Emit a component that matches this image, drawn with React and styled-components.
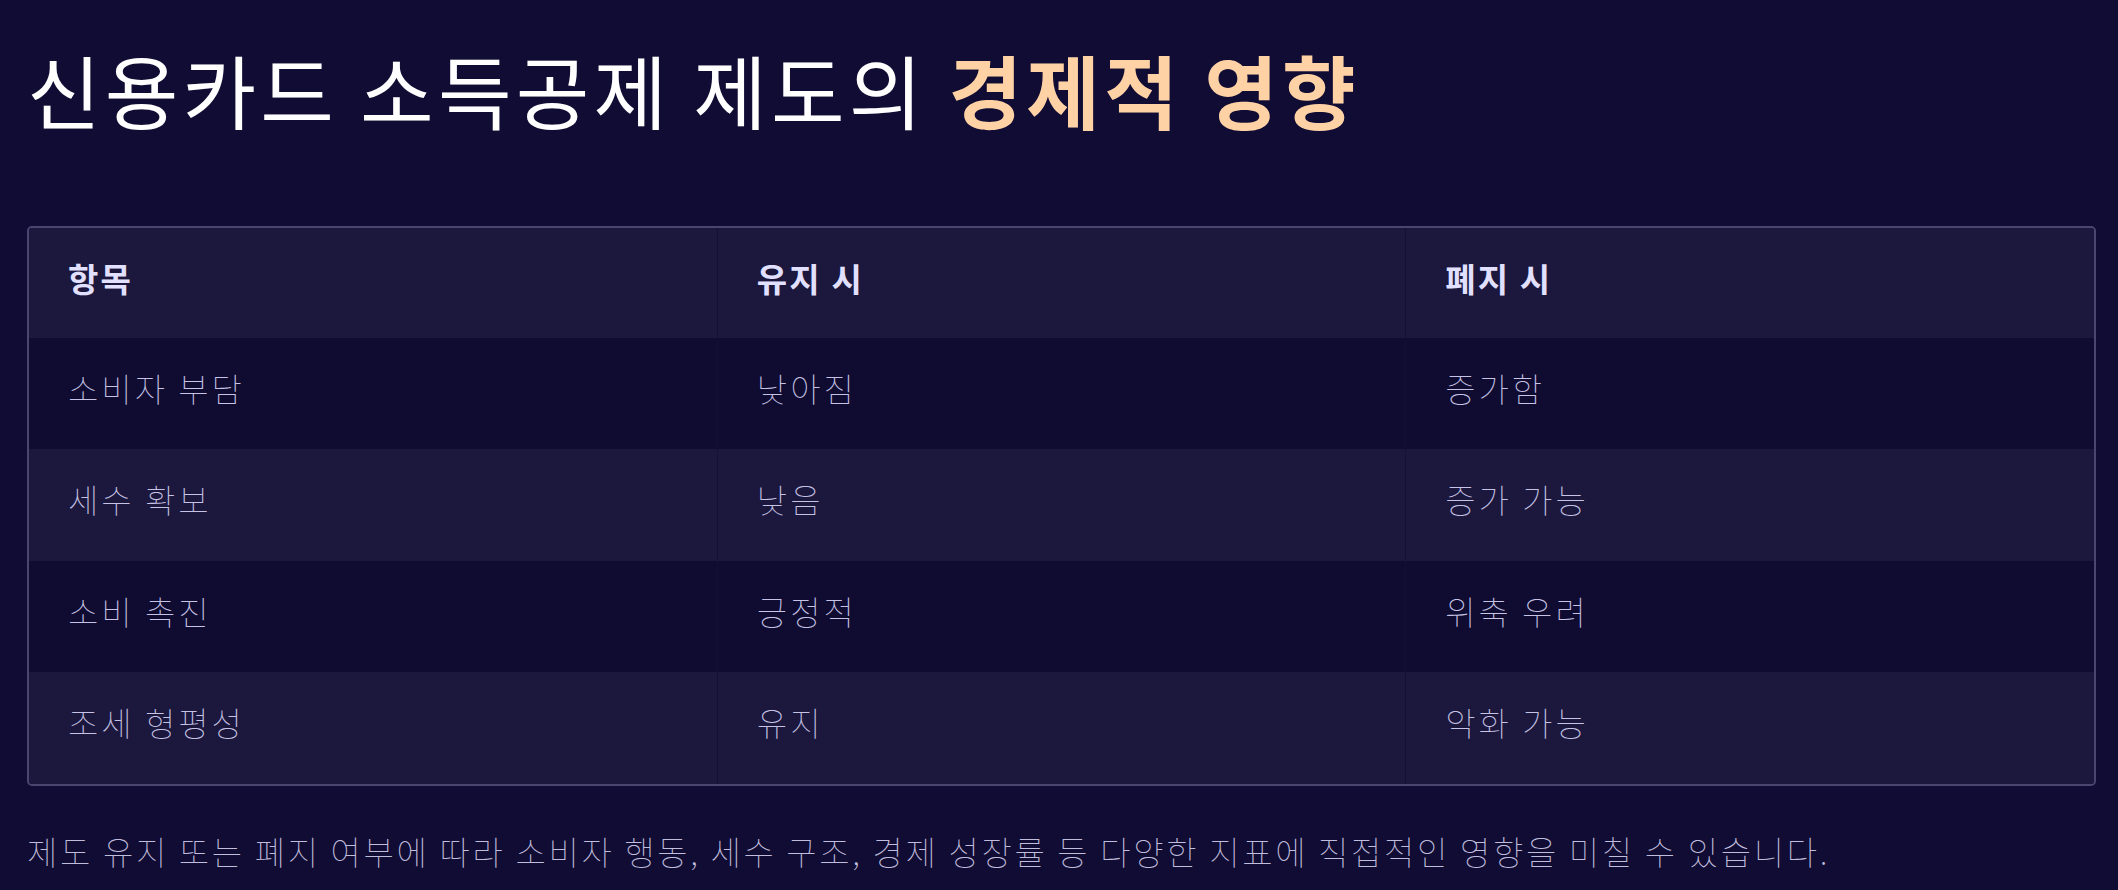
import React from "react";
import styled, { createGlobalStyle } from "styled-components";

const GlobalStyle = createGlobalStyle`
  html, body {
    margin: 0;
    padding: 0;
    background: #100c33;
  }
  body {
    font-family: "Noto Sans CJK KR", "Noto Sans", sans-serif;
    color: #ffffff;
  }
`;

const thin = `"Noto Sans CJK KR Thin", "Noto Sans CJK KR Light", "Noto Sans CJK KR", "Noto Sans", sans-serif`;

const Page = styled.main`
  min-height: 890px;
  box-sizing: border-box;
  padding: 40px 22px 0 27px;
  background: #100c33;
`;

const Title = styled.h1`
  margin: 0;
  font-size: 80px;
  font-weight: 400;
  line-height: 1.2;
  color: #ffffff;
  letter-spacing: 0.052em;
`;

const Accent = styled.span`
  color: #ffd2a6;
  font-weight: 700;
`;

const TableFrame = styled.div`
  margin-top: 90px;
  border: 2px solid #4a4670;
  border-radius: 5px;
  overflow: hidden;
`;

const Table = styled.table`
  width: 100%;
  border-collapse: collapse;
  table-layout: fixed;
`;

const Row = styled.tr`
  background: ${(p) => (p.$shaded ? "#1b173d" : "#0f0b31")};
`;

const HeadCell = styled.th`
  text-align: left;
  padding: 31px 39px 39px;
  font-size: 33px;
  line-height: 1.2;
  font-weight: 700;
  letter-spacing: 0.065em;
  color: #e2e0ff;
  border-right: 1px solid #141034;
  &:last-child {
    border-right: none;
  }
`;

const Cell = styled.td`
  padding: 31px 39px 41px;
  font-family: ${thin};
  font-size: 33px;
  line-height: 1.2;
  font-weight: 100;
  letter-spacing: 0.09em;
  color: #c6c3e4;
  border-right: 1px solid #141034;
  &:last-child {
    border-right: none;
  }
`;

const Note = styled.p`
  margin: 41px 0 0 0;
  font-family: ${thin};
  font-size: 33px;
  line-height: 1.5;
  font-weight: 100;
  letter-spacing: 0.08em;
  color: #c0bddd;
`;

const rows = [
  ["소비자 부담", "낮아짐", "증가함"],
  ["세수 확보", "낮음", "증가 가능"],
  ["소비 촉진", "긍정적", "위축 우려"],
  ["조세 형평성", "유지", "악화 가능"],
];

export default function App() {
  return (
    <>
      <GlobalStyle />
      <Page>
        <Title>
          신용카드 소득공제 제도의 <Accent>경제적 영향</Accent>
        </Title>
        <TableFrame>
          <Table>
            <thead>
              <Row $shaded>
                <HeadCell>항목</HeadCell>
                <HeadCell>유지 시</HeadCell>
                <HeadCell>폐지 시</HeadCell>
              </Row>
            </thead>
            <tbody>
              {rows.map((r, i) => (
                <Row key={r[0]} $shaded={i % 2 === 1}>
                  {r.map((c) => (
                    <Cell key={c}>{c}</Cell>
                  ))}
                </Row>
              ))}
            </tbody>
          </Table>
        </TableFrame>
        <Note>
          제도 유지 또는 폐지 여부에 따라 소비자 행동, 세수 구조, 경제 성장률 등 다양한 지표에 직접적인 영향을 미칠 수 있습니다.
        </Note>
      </Page>
    </>
  );
}
